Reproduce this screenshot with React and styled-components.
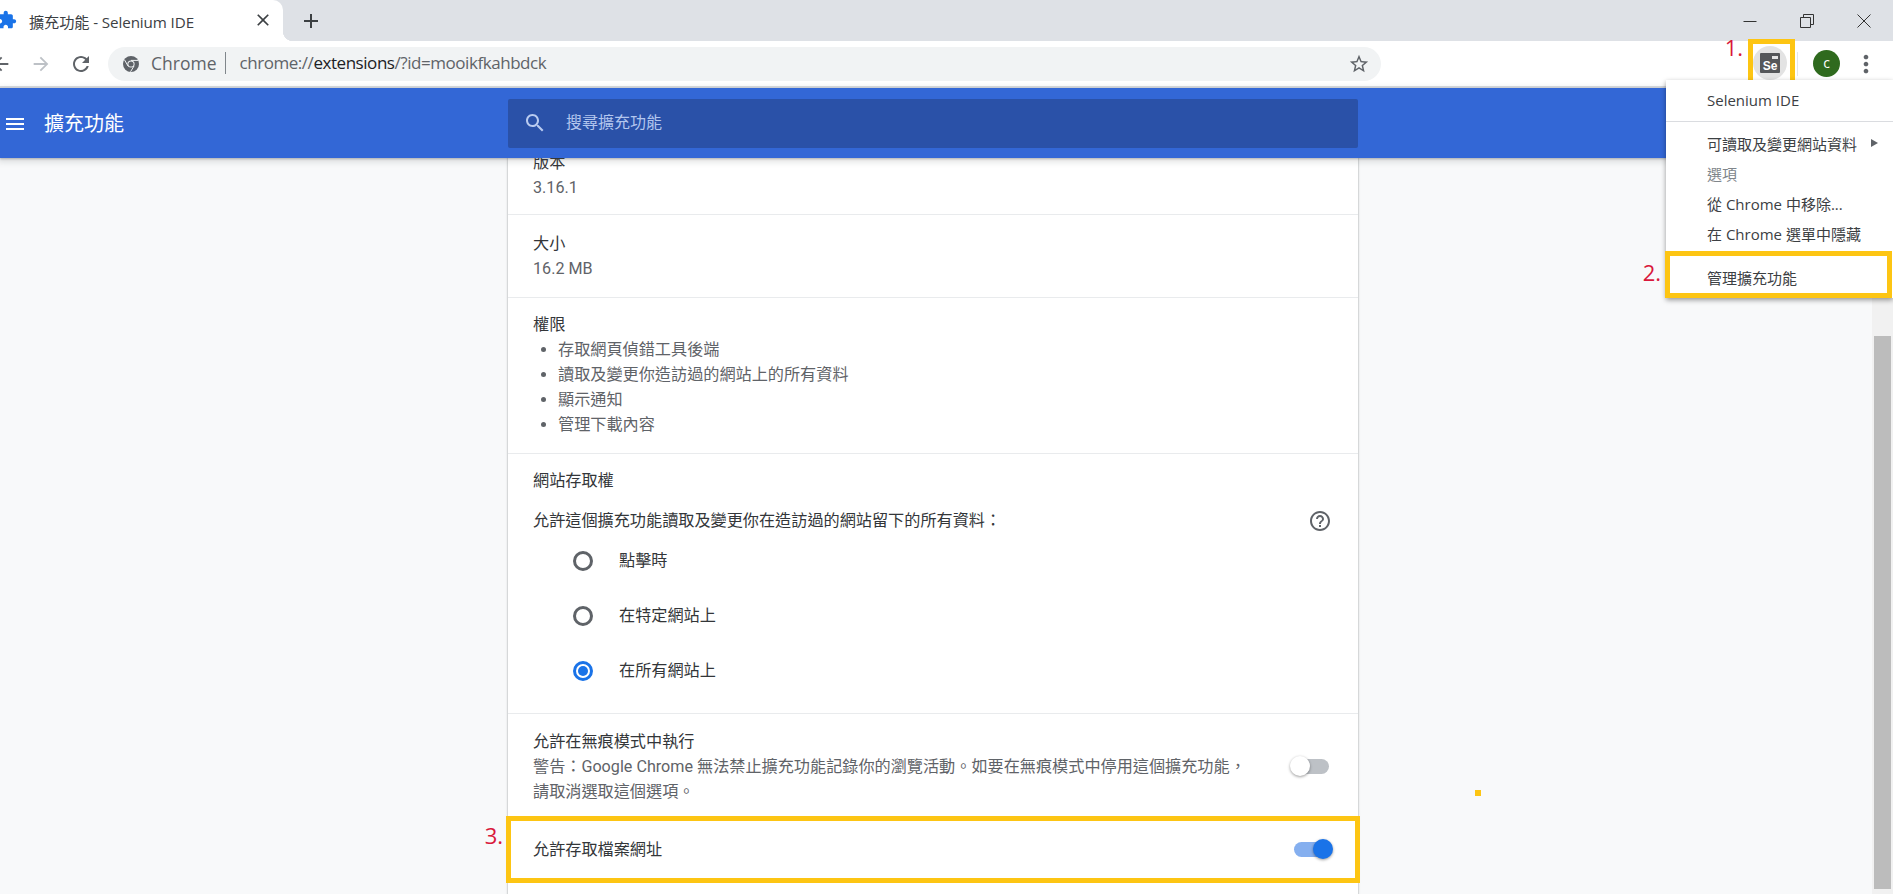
import React from 'react'
import styled, { createGlobalStyle } from 'styled-components'

const chromeFont = `"Open Sans", "Noto Sans CJK TC", sans-serif`
const pageFont = `Roboto, "Noto Sans CJK TC", sans-serif`
const yellow = '#fdc513'
const red = '#d9183b'

const paths = {
  puzzle: 'M20.5 11H19V7c0-1.1-.9-2-2-2h-4V3.5C13 2.12 11.88 1 10.5 1S8 2.12 8 3.5V5H4c-1.1 0-1.99.9-1.99 2v3.8H3.5c1.49 0 2.7 1.21 2.7 2.7s-1.21 2.7-2.7 2.7H2V20c0 1.1.9 2 2 2h3.8v-1.5c0-1.49 1.21-2.7 2.7-2.7 1.49 0 2.7 1.21 2.7 2.7V22H17c1.1 0 2-.9 2-2v-4h1.5c1.38 0 2.5-1.12 2.5-2.5S21.88 11 20.5 11z',
  close: 'M19 6.41L17.59 5 12 10.59 6.41 5 5 6.41 10.59 12 5 17.59 6.41 19 12 13.41 17.59 19 19 17.59 13.41 12z',
  add: 'M19 13h-6v6h-2v-6H5v-2h6V5h2v6h6v2z',
  back: 'M20 11H7.83l5.59-5.59L12 4l-8 8 8 8 1.41-1.41L7.83 13H20v-2z',
  forward: 'M4 11h12.17l-5.59-5.59L12 4l8 8-8 8-1.41-1.41L16.17 13H4v-2z',
  reload: 'M17.65 6.35C16.2 4.9 14.21 4 12 4c-4.42 0-7.99 3.58-7.99 8s3.57 8 7.99 8c3.73 0 6.84-2.55 7.73-6h-2.08c-.82 2.33-3.04 4-5.65 4-3.31 0-6-2.69-6-6s2.69-6 6-6c1.66 0 3.14.69 4.22 1.78L13 11h7V4l-2.35 2.35z',
  star: 'M22 9.24l-7.19-.62L12 2 9.19 8.63 2 9.24l5.46 4.73L5.82 21 12 17.27 18.18 21l-1.63-7.03L22 9.24zM12 15.4l-3.76 2.27 1-4.28-3.32-2.88 4.38-.38L12 6.1l1.71 4.04 4.38.38-3.32 2.88 1 4.28L12 15.4z',
  more: 'M12 8c1.1 0 2-.9 2-2s-.9-2-2-2-2 .9-2 2 .9 2 2 2zm0 2c-1.1 0-2 .9-2 2s.9 2 2 2 2-.9 2-2-.9-2-2-2zm0 6c-1.1 0-2 .9-2 2s.9 2 2 2 2-.9 2-2-.9-2-2-2z',
  menu: 'M3 18h18v-2H3v2zm0-5h18v-2H3v2zm0-7v2h18V6H3z',
  search: 'M15.5 14h-.79l-.28-.27C15.41 12.59 16 11.11 16 9.5 16 5.91 13.09 3 9.5 3S3 5.91 3 9.5 5.91 16 9.5 16c1.61 0 3.09-.59 4.23-1.57l.27.28v.79l5 4.99L20.49 19l-4.99-5zm-6 0C7.01 14 5 11.99 5 9.5S7.01 5 9.5 5 14 7.01 14 9.5 11.99 14 9.5 14z',
  help: 'M11 18h2v-2h-2v2zm1-16C6.48 2 2 6.48 2 12s4.48 10 10 10 10-4.48 10-10S17.52 2 12 2zm0 18c-4.41 0-8-3.59-8-8s3.59-8 8-8 8 3.59 8 8-3.59 8-8 8zm0-14c-2.21 0-4 1.79-4 4h2c0-1.1.9-2 2-2s2 .9 2 2c0 2-3 1.75-3 5h2c0-2.25 3-2.5 3-5 0-2.21-1.79-4-4-4z',
}

const GlobalStyle = createGlobalStyle`
  html, body {
    margin: 0;
    padding: 0;
    overflow: hidden;
    background: #f8f9fa;
  }
  * {
    box-sizing: border-box;
  }
`

const Svg = styled.svg`
  display: block;
  flex-shrink: 0;
  fill: ${props => props.$color || '#5f6368'};
`

const Icon = ({ name, size = 24, color }) => (
  <Svg viewBox="0 0 24 24" width={size} height={size} $color={color}>
    <path d={paths[name]} />
  </Svg>
)

const Browser = styled.div`
  position: relative;
  width: 1893px;
  height: 894px;
  overflow: hidden;
  display: flex;
  flex-direction: column;
  font-family: ${chromeFont};
`

const TabStrip = styled.div`
  height: 41px;
  flex-shrink: 0;
  background: #dee1e6;
  display: flex;
  align-items: center;
`

const Tab = styled.div`
  position: relative;
  width: 283px;
  height: 41px;
  background: #fff;
  border-top-right-radius: 10px;
  display: flex;
  align-items: center;
  padding-left: 29px;
  &::after {
    content: '';
    position: absolute;
    right: -10px;
    bottom: 0;
    width: 10px;
    height: 10px;
    background: radial-gradient(circle at 100% 0, transparent 10px, #fff 10.5px);
  }
`

const TabFavicon = styled.span`
  position: absolute;
  left: -3px;
  top: 10px;
`

const TabTitle = styled.span`
  font-size: 15.2px;
  color: #3c4043;
  white-space: nowrap;
  letter-spacing: -0.1px;
`

const TabClose = styled.span`
  position: absolute;
  left: 253px;
  top: 10px;
`

const NewTab = styled.span`
  margin-left: 16px;
`

const WindowControls = styled.div`
  margin-left: auto;
  padding-right: 1px;
  display: flex;
`

const WindowButton = styled.div`
  width: 57px;
  height: 34px;
  display: flex;
  align-items: center;
  justify-content: center;
`

const Toolbar = styled.div`
  height: 47px;
  flex-shrink: 0;
  background: #fff;
  border-bottom: 2px solid #dadce0;
  display: flex;
  align-items: flex-start;
`

const NavGroup = styled.div`
  margin-left: -19px;
  display: flex;
`

const NavButton = styled.div`
  width: 40px;
  height: 45px;
  display: flex;
  align-items: center;
  justify-content: center;
`

const Omnibox = styled.div`
  width: 1273px;
  height: 34px;
  margin: 6px 0 0 7px;
  padding: 0 11px 0 15px;
  border-radius: 17px;
  background: #f1f3f4;
  display: flex;
  align-items: center;
  font-size: 17.5px;
  line-height: 30px;
  color: #5f6368;
  white-space: nowrap;
`

const SiteChip = styled.span`
  position: relative;
  top: -1px;
  margin-left: 12px;
  padding-right: 9px;
  border-right: 1.5px solid #80868b;
  line-height: 22px;
`

const Url = styled.span`
  position: relative;
  top: -1px;
  margin-left: 13px;
  flex: 1;
  font-size: 17px;
  letter-spacing: -0.45px;
  b {
    font-weight: 400;
    color: #202124;
  }
`

const Actions = styled.div`
  margin-left: auto;
  padding-right: 13px;
  height: 45px;
  display: flex;
  align-items: center;
`

const ExtensionBox = styled.div`
  position: relative;
  width: 47px;
  height: 47px;
  margin-top: -2px;
  padding-right: 3px;
  border: 5px solid ${yellow};
  display: flex;
  align-items: center;
  justify-content: center;
`

const Mark = styled.span`
  position: absolute;
  right: calc(100% + ${props => props.$gap}px);
  top: ${props => props.$top}px;
  font: 22px/24px ${chromeFont};
  color: ${red};
  white-space: nowrap;
`

const ExtensionCircle = styled.div`
  flex-shrink: 0;
  width: 34px;
  height: 34px;
  border-radius: 50%;
  background: #e3e3e3;
  display: flex;
  align-items: center;
  justify-content: center;
`

const SeleniumIcon = styled.div`
  position: relative;
  width: 20px;
  height: 20px;
  padding-top: 7px;
  border-radius: 1px;
  background: #55575a;
  color: #fff;
  font: 700 12px/12px "Liberation Sans", sans-serif;
  text-align: center;
  &::after {
    content: '';
    position: absolute;
    top: 3px;
    right: 2px;
    width: 6px;
    height: 3px;
    background: #e6e6e6;
  }
`

const ActionDivider = styled.div`
  width: 1px;
  height: 24px;
  margin-left: 2px;
  background: #e4e6e8;
`

const Avatar = styled.div`
  width: 27px;
  height: 27px;
  margin: 0 12px 0 15px;
  border-radius: 50%;
  background: #2f6a1e;
  color: #fff;
  font-size: 14px;
  line-height: 25px;
  text-align: center;
`

const Menu = styled.div`
  position: absolute;
  z-index: 5;
  top: 80px;
  right: 0;
  width: 227px;
  height: 218px;
  background: #fff;
  box-shadow: 0 2px 5px rgba(0, 0, 0, 0.4);
  font-size: 15px;
  color: #3c4043;
`

const MenuItem = styled.div`
  position: relative;
  height: ${props => props.$height || 30}px;
  padding: 0 0 2px 41px;
  display: flex;
  align-items: center;
  white-space: nowrap;
  color: ${props => (props.$muted ? '#80868b' : '#3c4043')};
`

const MenuArrow = styled.span`
  position: absolute;
  left: 205px;
  top: 10px;
  width: 0;
  height: 0;
  border-left: 7px solid #5f6368;
  border-top: 4.5px solid transparent;
  border-bottom: 4.5px solid transparent;
`

const MenuDivider = styled.div`
  height: 1px;
  margin-bottom: 7px;
  background: #dadce0;
`

const ManageItem = styled.div`
  position: relative;
  height: 47px;
  margin: 2px 1px 0 -1px;
  padding: 6px 0 0 37px;
  border: 5px solid ${yellow};
  display: flex;
  align-items: center;
`

const Page = styled.div`
  flex: 1;
  min-height: 0;
  display: flex;
  flex-direction: column;
`

const PageHeader = styled.header`
  position: relative;
  z-index: 2;
  height: 70px;
  flex-shrink: 0;
  background: #3367d6;
  box-shadow: 0 1px 2px rgba(60, 64, 67, 0.3), 0 2px 6px 2px rgba(60, 64, 67, 0.15);
  display: flex;
  align-items: center;
  font-family: ${pageFont};
`

const HeaderLeft = styled.div`
  width: 508px;
  padding-left: 3px;
  display: flex;
  align-items: center;
`

const Hamburger = styled.span`
  margin-top: 2px;
`

const HeaderTitle = styled.h1`
  margin: 0 0 0 17px;
  padding-bottom: 2px;
  font-size: 20px;
  font-weight: 400;
  color: #fff;
`

const SearchBox = styled.div`
  width: 850px;
  height: 49px;
  padding-left: 15px;
  border-radius: 2px;
  background: #2a51a8;
  display: flex;
  align-items: center;
  gap: 19px;
  font-size: 16px;
  color: #b3c6ee;
`

const Placeholder = styled.span`
  padding-bottom: 5px;
`

const PageBody = styled.div`
  flex: 1;
  min-height: 0;
  display: flex;
`

const Content = styled.main`
  position: relative;
  flex: 1;
  overflow: hidden;
  padding-right: 6px;
  display: flex;
  justify-content: center;
  font-family: ${pageFont};
`

const Card = styled.section`
  width: 850px;
  height: 800px;
  margin-top: -24px;
  background: #fff;
  box-shadow: 0 0 2px rgba(60, 64, 67, 0.55);
  font-size: 16.15px;
  line-height: 25px;
  color: #333639;
`

const Row = styled.div`
  padding: ${props => props.$top}px 28px ${props => props.$bottom}px 25px;
  border-bottom: ${props => (props.$plain ? 'none' : '1px solid #e9ebed')};
`

const SplitLine = styled.div`
  display: flex;
  align-items: center;
  justify-content: space-between;
`

const Value = styled.div`
  color: #5f6368;
`

const PermissionList = styled.ul`
  margin: 0;
  padding: 0 0 0 25px;
  list-style: none;
  color: #5f6368;
`

const Permission = styled.li`
  position: relative;
  &::before {
    content: '';
    position: absolute;
    left: -17px;
    top: 10px;
    width: 5px;
    height: 5px;
    border-radius: 50%;
    background: #5f6368;
  }
`

const AccessPrompt = styled(SplitLine)`
  margin: 15px -2px 0 0;
`

const RadioGroup = styled.div`
  padding-left: 40px;
`

const RadioRow = styled.div`
  height: 55px;
  display: flex;
  align-items: center;
  gap: 26px;
`

const Radio = styled.span`
  width: 20px;
  height: 20px;
  border-radius: 50%;
  border: 3px solid ${props => (props.$checked ? '#1a73e8' : '#5f6368')};
  display: flex;
  align-items: center;
  justify-content: center;
  &::after {
    content: '';
    width: 10px;
    height: 10px;
    border-radius: 50%;
    background: ${props => (props.$checked ? '#1a73e8' : 'transparent')};
  }
`

const Toggle = styled.span`
  position: relative;
  display: block;
  flex-shrink: 0;
  width: 35px;
  height: 15px;
  margin-right: 1px;
  border-radius: 8px;
  background: ${props => (props.$on ? '#85afef' : '#bdc1c6')};
  &::after {
    content: '';
    position: absolute;
    top: -3px;
    left: ${props => (props.$on ? '19px' : '-4px')};
    width: 20px;
    height: 20px;
    border-radius: 50%;
    background: ${props => (props.$on ? '#1a73e8' : '#fff')};
    box-shadow: 0 1px 3px rgba(0, 0, 0, 0.4);
  }
`

const FileAccessRow = styled.div`
  position: relative;
  height: 67px;
  margin: 0 -2px;
  padding: 0 25px 0 22px;
  border: 5px solid ${yellow};
  display: flex;
  align-items: center;
  justify-content: space-between;
`

const StrayDot = styled.span`
  position: absolute;
  left: 1475px;
  top: 632px;
  width: 6px;
  height: 6px;
  background: ${yellow};
`

const Scrollbar = styled.div`
  width: 21px;
  flex-shrink: 0;
  padding: 178px 2px 5px;
  background: #f1f1f1;
  display: flex;
`

const ScrollThumb = styled.div`
  flex: 1;
  background: #bcbcbc;
`

const permissions = ['存取網頁偵錯工具後端', '讀取及變更你造訪過的網站上的所有資料', '顯示通知', '管理下載內容']
const accessOptions = [
  { label: '點擊時' },
  { label: '在特定網站上' },
  { label: '在所有網站上', checked: true },
]

function App() {
  return (
    <Browser>
      <GlobalStyle />
      <TabStrip>
        <Tab>
          <TabFavicon><Icon name="puzzle" size={20} color="#1a73e8" /></TabFavicon>
          <TabTitle>擴充功能 - Selenium IDE</TabTitle>
          <TabClose><Icon name="close" size={20} color="#3c4043" /></TabClose>
        </Tab>
        <NewTab><Icon name="add" size={24} color="#3c4043" /></NewTab>
        <WindowControls>
          <WindowButton>
            <svg width="14" height="14" viewBox="0 0 14 14"><path d="M0.5 7.5H13.5" stroke="#333" fill="none" /></svg>
          </WindowButton>
          <WindowButton>
            <svg width="14" height="14" viewBox="0 0 14 14"><path d="M3.5 3V0.5H13.5V10.5H11M0.5 3.5H10.5V13.5H0.5Z" stroke="#333" fill="none" /></svg>
          </WindowButton>
          <WindowButton>
            <svg width="14" height="14" viewBox="0 0 14 14"><path d="M0.5 0.5L13.5 13.5M13.5 0.5L0.5 13.5" stroke="#333" fill="none" /></svg>
          </WindowButton>
        </WindowControls>
      </TabStrip>

      <Toolbar>
        <NavGroup>
          <NavButton><Icon name="back" size={22} color="#5f6368" /></NavButton>
          <NavButton><Icon name="forward" size={22} color="#bdc1c6" /></NavButton>
          <NavButton><Icon name="reload" size={24} color="#5f6368" /></NavButton>
        </NavGroup>
        <Omnibox>
          <svg width="16" height="16" viewBox="0 0 16 16">
            <circle cx="8" cy="8" r="8" fill="#5f6368" />
            <circle cx="8" cy="8" r="3.6" fill="#f1f3f4" />
            <circle cx="8" cy="8" r="2.6" fill="#5f6368" />
            <path d="M8 4.4H15M5 10L1.6 4M11 10L7.5 15.8" stroke="#f1f3f4" strokeWidth="1" fill="none" />
          </svg>
          <SiteChip>Chrome</SiteChip>
          <Url>chrome://<b>extensions</b>/?id=mooikfkahbdck</Url>
          <Icon name="star" size={22} color="#5f6368" />
        </Omnibox>
        <Actions>
          <ExtensionBox>
            <Mark $gap={10} $top={-9}>1.</Mark>
            <ExtensionCircle>
              <SeleniumIcon>Se</SeleniumIcon>
            </ExtensionCircle>
          </ExtensionBox>
          <ActionDivider />
          <Avatar>c</Avatar>
          <Icon name="more" size={28} color="#5f6368" />
        </Actions>
      </Toolbar>

      <Menu>
        <MenuItem $height={41}>Selenium IDE</MenuItem>
        <MenuDivider />
        <MenuItem>可讀取及變更網站資料<MenuArrow /></MenuItem>
        <MenuItem $muted>選項</MenuItem>
        <MenuItem>從 Chrome 中移除...</MenuItem>
        <MenuItem>在 Chrome 選單中隱藏</MenuItem>
        <ManageItem>
          <Mark $gap={9} $top={4}>2.</Mark>
          管理擴充功能
        </ManageItem>
      </Menu>

      <Page>
        <PageHeader>
          <HeaderLeft>
            <Hamburger><Icon name="menu" size={24} color="#fff" /></Hamburger>
            <HeaderTitle>擴充功能</HeaderTitle>
          </HeaderLeft>
          <SearchBox>
            <Icon name="search" size={24} color="#b9cbf0" />
            <Placeholder>搜尋擴充功能</Placeholder>
          </SearchBox>
        </PageHeader>
        <PageBody>
          <Content>
            <Card>
              <Row $top={16} $bottom={14}>
                <div>版本</div>
                <Value>3.16.1</Value>
              </Row>
              <Row $top={16} $bottom={16}>
                <div>大小</div>
                <Value>16.2 MB</Value>
              </Row>
              <Row $top={14} $bottom={16}>
                <div>權限</div>
                <PermissionList>
                  {permissions.map(text => <Permission key={text}>{text}</Permission>)}
                </PermissionList>
              </Row>
              <Row $top={14} $bottom={15}>
                <div>網站存取權</div>
                <AccessPrompt>
                  <span>允許這個擴充功能讀取及變更你在造訪過的網站留下的所有資料：</span>
                  <Icon name="help" size={24} color="#5f6368" />
                </AccessPrompt>
                <RadioGroup>
                  {accessOptions.map(option => (
                    <RadioRow key={option.label}>
                      <Radio $checked={option.checked} />
                      {option.label}
                    </RadioRow>
                  ))}
                </RadioGroup>
              </Row>
              <Row $top={15} $bottom={12} $plain>
                <SplitLine>
                  <div>
                    <div>允許在無痕模式中執行</div>
                    <Value>
                      警告：Google Chrome 無法禁止擴充功能記錄你的瀏覽活動。如要在無痕模式中停用這個擴充功能，<br />
                      請取消選取這個選項。
                    </Value>
                  </div>
                  <Toggle />
                </SplitLine>
              </Row>
              <FileAccessRow>
                <Mark $gap={8} $top={2}>3.</Mark>
                允許存取檔案網址
                <Toggle $on />
              </FileAccessRow>
            </Card>
            <StrayDot />
          </Content>
          <Scrollbar><ScrollThumb /></Scrollbar>
        </PageBody>
      </Page>
    </Browser>
  )
}

export default App
